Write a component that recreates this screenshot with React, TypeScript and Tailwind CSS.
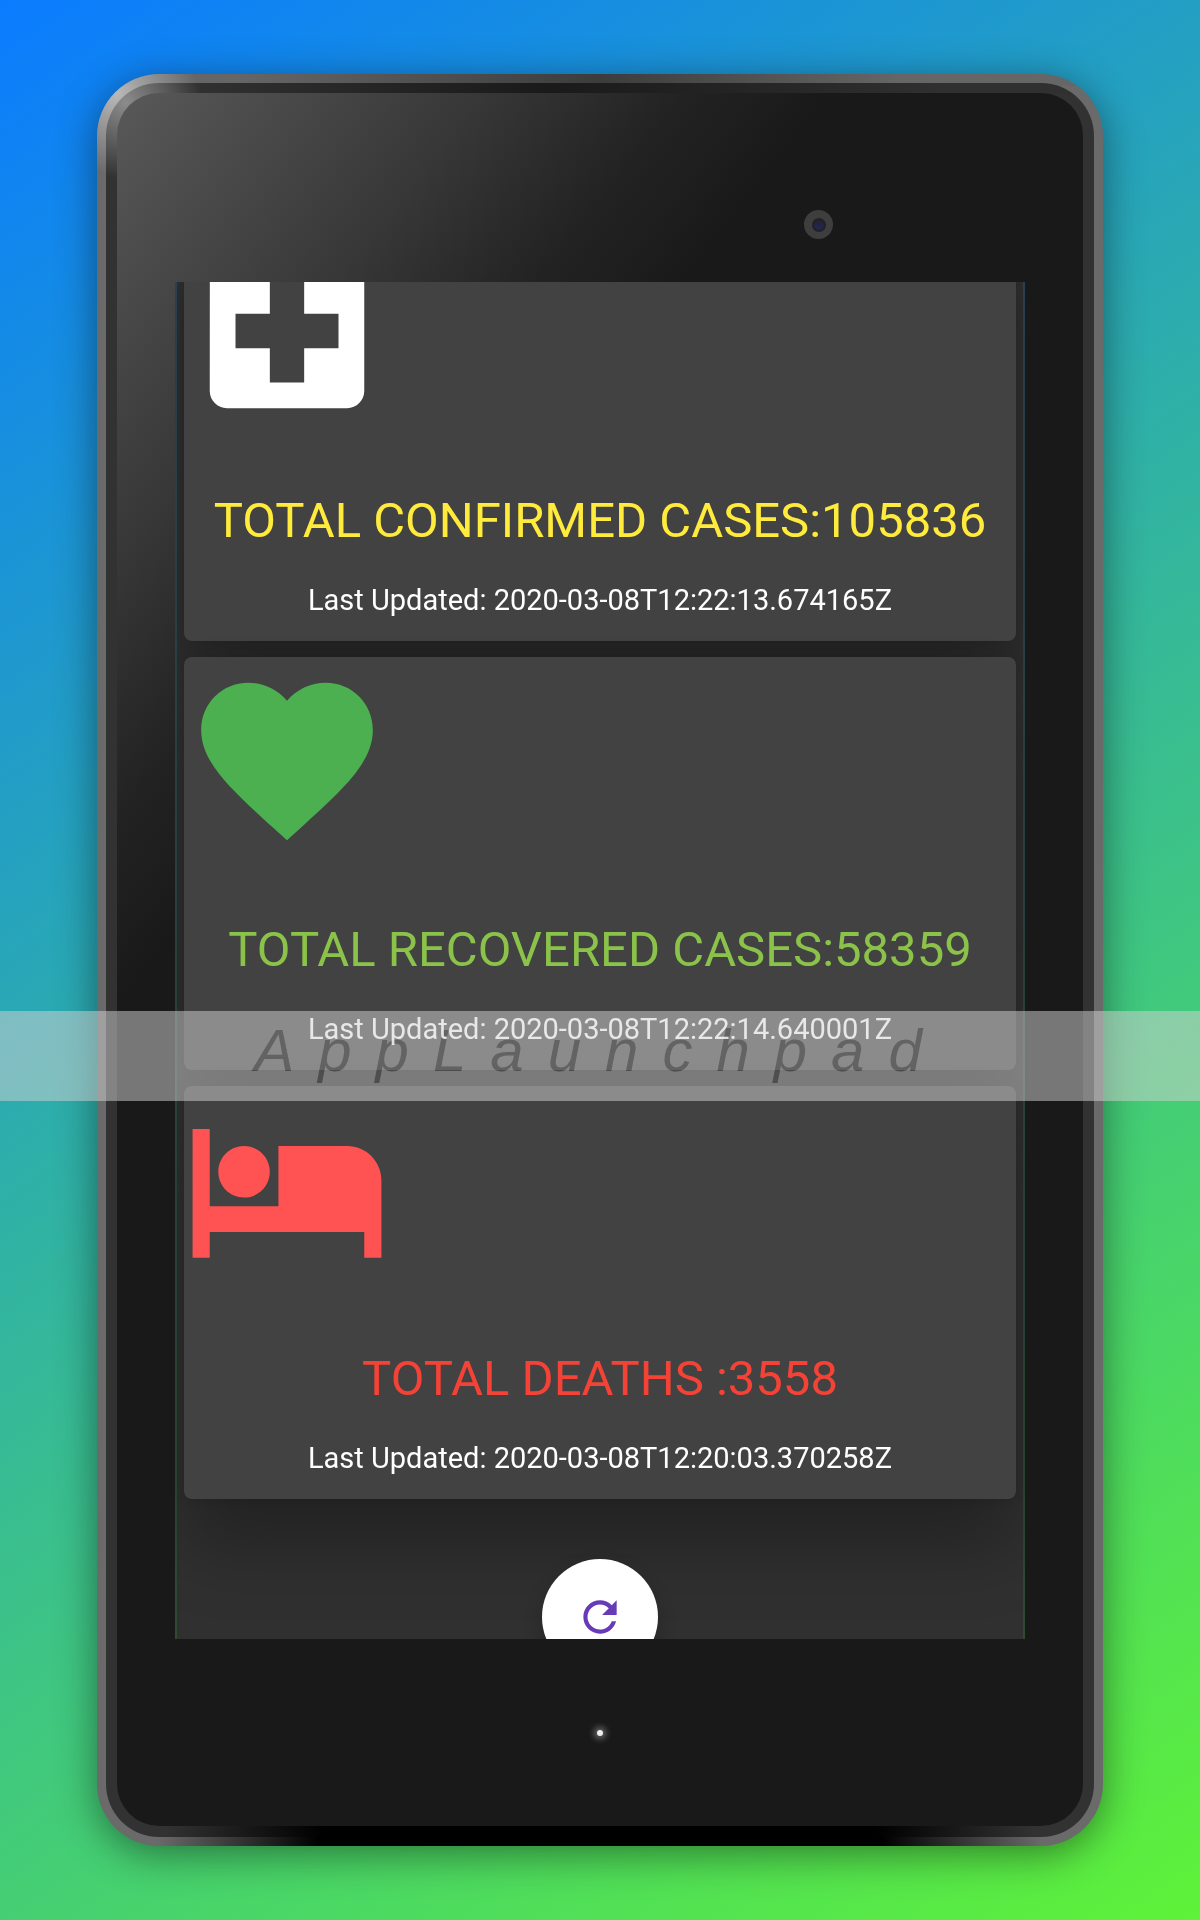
import React from "react";

type Stat = {
  label: string;
  updated: string;
  color: string;
  iconColor: string;
  path: string;
};

const stats: Stat[] = [
  {
    label: "TOTAL CONFIRMED CASES:105836",
    updated: "Last Updated: 2020-03-08T12:22:13.674165Z",
    color: "text-[#ffeb3b]",
    iconColor: "text-white",
    path: "M19 3H5c-1.1 0-1.99.9-1.99 2L3 19c0 1.1.9 2 2 2h14c1.1 0 2-.9 2-2V5c0-1.1-.9-2-2-2zm-1 11h-4v4h-4v-4H6v-4h4V6h4v4h4v4z",
  },
  {
    label: "TOTAL RECOVERED CASES:58359",
    updated: "Last Updated: 2020-03-08T12:22:14.640001Z",
    color: "text-[#8bc34a]",
    iconColor: "text-[#4caf50]",
    path: "M12 21.35l-1.45-1.32C5.4 15.36 2 12.28 2 8.5 2 5.42 4.42 3 7.5 3c1.74 0 3.41.81 4.5 2.09C13.09 3.81 14.76 3 16.5 3 19.58 3 22 5.42 22 8.5c0 3.78-3.4 6.86-8.55 11.54L12 21.35z",
  },
  {
    label: "TOTAL DEATHS :3558",
    updated: "Last Updated: 2020-03-08T12:20:03.370258Z",
    color: "text-[#f44336]",
    iconColor: "text-[#ff5252]",
    path: "M7 13c1.66 0 3-1.34 3-3S8.66 7 7 7s-3 1.34-3 3 1.34 3 3 3zm12-6h-8v7H3V5H1v15h2v-3h18v3h2v-9c0-2.21-1.79-4-4-4z",
  },
];

function StatCard({ stat }: { stat: Stat }) {
  return (
    <article className="shrink-0 rounded-lg bg-[#424242] pb-6 shadow-[0_50px_70px_-2px_rgba(0,0,0,0.28),0_0_12px_rgba(0,0,0,0.12)]">
      <svg viewBox="0 0 24 24" className={`h-[206px] w-[206px] ${stat.iconColor}`} fill="currentColor" aria-hidden="true">
        <path d={stat.path} />
      </svg>
      <h2 className={`mt-[57px] text-center text-[49px] leading-[60px] whitespace-nowrap ${stat.color}`}>{stat.label}</h2>
      <p className="mt-8 text-center text-[29px] leading-[34px] whitespace-nowrap text-white">{stat.updated}</p>
    </article>
  );
}

function Screen() {
  return (
    <main className="flex min-h-0 flex-1 overflow-hidden bg-linear-to-b from-[#2a4856] to-[#2f4a33] px-[2px]">
      <div className="flex min-w-0 flex-1 flex-col bg-[#303030] px-[7px]">
        <div className="-mt-[54px] flex flex-col gap-4">
          {stats.map((stat) => (
            <StatCard key={stat.label} stat={stat} />
          ))}
        </div>
        <button
          type="button"
          aria-label="Refresh"
          className="relative mt-[60px] flex h-[116px] w-[116px] shrink-0 items-center justify-center self-center rounded-full bg-white text-[#673ab7] shadow-[0_10px_20px_rgba(0,0,0,0.2)]"
        >
          <svg viewBox="0 0 24 24" className="h-[50px] w-[50px]" fill="currentColor" aria-hidden="true">
            <path d="M17.65 6.35C16.2 4.9 14.21 4 12 4c-4.42 0-7.99 3.58-7.99 8s3.57 8 7.99 8c3.73 0 6.84-2.55 7.73-6h-2.08c-.82 2.33-3.04 4-5.65 4-3.31 0-6-2.69-6-6s2.69-6 6-6c1.66 0 3.14.69 4.22 1.78L13 11h7V4l-2.35 2.35z" />
          </svg>
        </button>
      </div>
    </main>
  );
}

export default function App() {
  return (
    <div className="relative flex h-screen min-h-[1400px] bg-[linear-gradient(146deg,#0a7cff_0%,#5ef238_100%)] px-[97px] py-[74px] font-['Roboto',sans-serif]">
      <div className="flex min-w-0 flex-1 rounded-[62px] p-[9px] shadow-[0_8px_40px_rgba(0,0,0,0.45)] [background:radial-gradient(circle_at_20px_20px,#b8b8b8_0,#b8b8b800_80px),linear-gradient(to_right,#0000_6%,#000_22%,#000_78%,#0000_94%)_bottom/100%_12px_no-repeat,linear-gradient(to_right,#666_14%,#3c3c3c_50%,#666_80%)_top/100%_12px_no-repeat,#6a6a6a]">
        <div className="flex min-w-0 flex-1 rounded-[53px] px-[11px] pt-[10px] pb-[11px] [background:radial-gradient(circle_at_20px_20px,#8c8c8c_0,#8c8c8c00_76px),linear-gradient(to_right,#0000_6%,#000_22%,#000_78%,#0000_94%)_bottom/100%_11px_no-repeat,linear-gradient(to_right,#303030_10%,#1a1a1a_45%,#303030_85%)_top/100%_12px_no-repeat,#323232]">
          <div className="flex min-w-0 flex-1 flex-col rounded-[42px] bg-[linear-gradient(128deg,#595959_0,#373737_290px,#222222_450px,#1d1d1d_520px,#191919_560px)] px-[58px]">
            <header className="flex h-[189px] shrink-0 items-center justify-center">
              <div className="mt-[74px] ml-[437px] flex h-[29px] w-[29px] items-center justify-center rounded-full bg-[#3e3e3e]">
                <div className="h-[14px] w-[14px] rounded-full border-2 border-[#222] bg-linear-to-b from-[#22222e] to-[#20265a]" />
              </div>
            </header>
            <Screen />
            <footer className="flex h-[187px] shrink-0 items-center justify-center">
              <div className="h-[6px] w-[6px] rounded-full bg-[#eee] shadow-[0_0_6px_3px_rgba(255,255,255,0.35)]" />
            </footer>
          </div>
        </div>
      </div>
      <div className="pointer-events-none absolute inset-x-0 top-[1011px] h-[90px] bg-[#d2d2d2]/51" />
      <p className="pointer-events-none absolute inset-x-0 top-[1011px] text-center font-['Liberation_Sans',sans-serif] text-[60px] leading-[80px] tracking-[24px] text-[#bebebe] italic mix-blend-color-burn">
        AppLaunchpad
      </p>
    </div>
  );
}
